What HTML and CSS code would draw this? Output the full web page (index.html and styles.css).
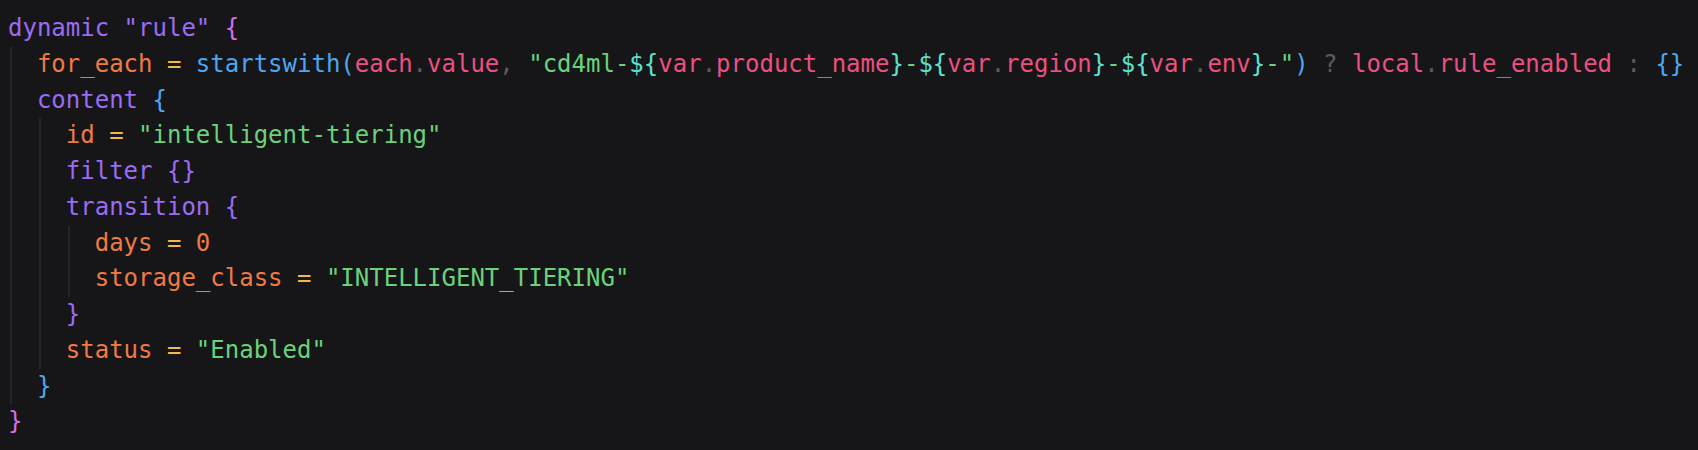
FILE: index.html
```html
<!DOCTYPE html>
<html>
<head>
<meta charset="utf-8">
<link rel="stylesheet" href="styles.css">
</head>
<body>
<div class="code">
  <div class="line"><span class="kw">dynamic</span> <span class="kw">"rule"</span> <span class="b1">{</span></div>
  <div class="block g1">
    <div class="line"><span class="ind1"></span><span class="at">for_each</span> <span class="op">=</span> <span class="fn">startswith(</span><span class="vr">each</span><span class="pu">.</span><span class="vr">value</span><span class="pu">,</span> <span class="st">"cd4ml-</span><span class="ip">${</span><span class="vr">var</span><span class="pu">.</span><span class="vr">product_name</span><span class="ip">}</span><span class="st">-</span><span class="ip">${</span><span class="vr">var</span><span class="pu">.</span><span class="vr">region</span><span class="ip">}</span><span class="st">-</span><span class="ip">${</span><span class="vr">var</span><span class="pu">.</span><span class="vr">env</span><span class="ip">}</span><span class="st">-"</span><span class="fn">)</span> <span class="pu">?</span> <span class="vr">local</span><span class="pu">.</span><span class="vr">rule_enabled</span> <span class="pu">:</span> <span class="fn">{}</span></div>
    <div class="line"><span class="ind1"></span><span class="kw">content</span> <span class="fn">{</span></div>
    <div class="block g2">
      <div class="line"><span class="ind2"></span><span class="at">id</span> <span class="op">=</span> <span class="st">"intelligent-tiering"</span></div>
      <div class="line"><span class="ind2"></span><span class="kw">filter</span> <span class="kw">{}</span></div>
      <div class="line"><span class="ind2"></span><span class="kw">transition</span> <span class="kw">{</span></div>
      <div class="block g3">
        <div class="line"><span class="ind3"></span><span class="at">days</span> <span class="op">=</span> <span class="at">0</span></div>
        <div class="line"><span class="ind3"></span><span class="at">storage_class</span> <span class="op">=</span> <span class="st">"INTELLIGENT_TIERING"</span></div>
      </div>
      <div class="line"><span class="ind2"></span><span class="kw">}</span></div>
      <div class="line"><span class="ind2"></span><span class="at">status</span> <span class="op">=</span> <span class="st">"Enabled"</span></div>
    </div>
    <div class="line"><span class="ind1"></span><span class="fn">}</span></div>
  </div>
  <div class="line"><span class="b1">}</span></div>
</div>
</body>
</html>
```

FILE: styles.css
```css
html, body {
  margin: 0;
  padding: 0;
  background: #161619;
}
body {
  width: 1698px;
  height: 450px;
  overflow: hidden;
}
.code {
  padding: 11px 0 0 8px;
  font-family: "DejaVu Sans Mono", monospace;
  font-size: 24px;
  line-height: 35.75px;
  color: #d0d0d0;
}
.line {
  height: 35.75px;
  white-space: pre;
}
.block {
  position: relative;
}
.block::before {
  content: "";
  position: absolute;
  top: 0;
  bottom: 0;
  width: 2px;
  background: #26262a;
}
.g1::before { left: 2px; }
.g2::before { left: 31px; }
.g3::before { left: 60px; }
.ind1 { display: inline-block; width: 28.9px; }
.ind2 { display: inline-block; width: 57.8px; }
.ind3 { display: inline-block; width: 86.7px; }
.kw { color: #9b6cf2; }
.b1 { color: #d56ee6; }
.at { color: #ef7a45; }
.op { color: #f2b84b; }
.fn { color: #4ea6f0; }
.vr { color: #ea5180; }
.pu { color: #5a5a5e; }
.st { color: #6bd27b; }
.ip { color: #5ee0cf; }
```
